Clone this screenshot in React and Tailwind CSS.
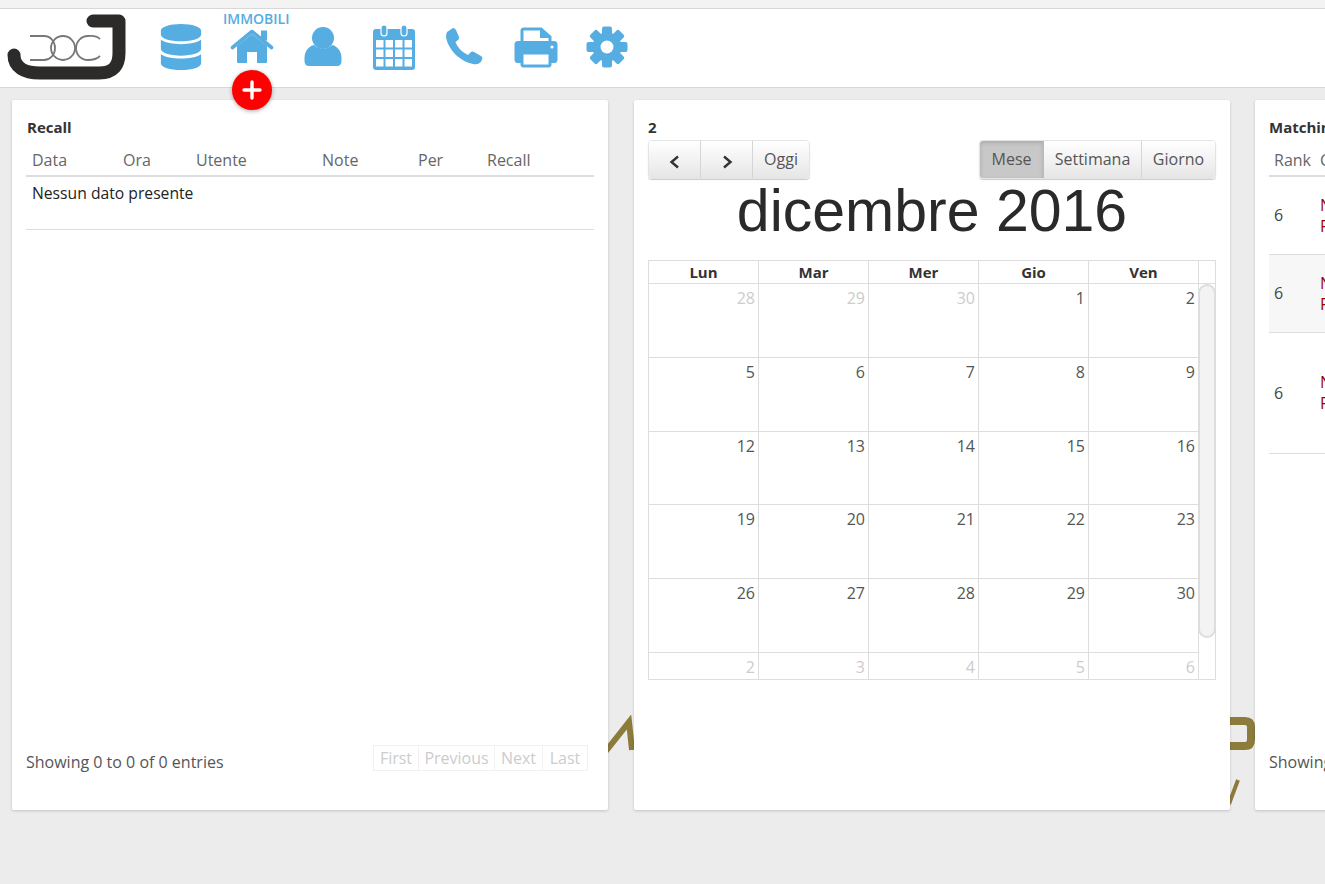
import React from 'react';
import { FaDatabase } from 'react-icons/fa';

const weeks = [
  [28, 29, 30, 1, 2],
  [5, 6, 7, 8, 9],
  [12, 13, 14, 15, 16],
  [19, 20, 21, 22, 23],
  [26, 27, 28, 29, 30],
  [2, 3, 4, 5, 6],
];
const rowHeights = ['h-[74px]', 'h-[74px]', 'h-[73px]', 'h-[74px]', 'h-[74px]', 'h-[26px]'];
const days = ['Lun', 'Mar', 'Mer', 'Gio', 'Ven'];
const blue = '#55ade2';

const Logo = () => (
  <svg width="126" height="72" viewBox="0 4 126 72" fill="none" className="block">
    <path d="M7 47 C7 59 17 65 33 65 L92 65 C107 65 112 57 112 45 L112 13 L86 13" stroke="#2c2b2a" strokeWidth="13" strokeLinecap="round" strokeLinejoin="round" />
    <path d="M23 28 L37 28 C44 28 48 34 48 40 C48 47 43 52 37 52 L23 52" stroke="#777" strokeWidth="1.8" />
    <circle cx="56" cy="40" r="12" stroke="#777" strokeWidth="1.8" />
    <path d="M93 31 C89 27 85 28 81 28 C74 28 69 34 69 40 C69 47 74 52 81 52 C85 52 89 52 93 48" stroke="#777" strokeWidth="1.8" />
  </svg>
);

const HomeIcon = () => (
  <svg width="44" height="36" viewBox="0 0 44 36" className="block">
    <path d="M7 17 L22 5 L37 17 V33 Q37 34 36 34 H27 V23 H17 V34 H8 Q7 34 7 33 Z" fill={blue} />
    <path d="M2.5 18.5 L22 2.5 L41.5 18.5" fill="none" stroke={blue} strokeWidth="3.6" strokeLinecap="round" strokeLinejoin="round" />
    <rect x="31" y="1.5" width="6" height="10" fill={blue} />
  </svg>
);

const UserIcon = () => (
  <svg width="38" height="40" viewBox="0 0 38 40" className="block">
    <circle cx="19" cy="11" r="11" fill={blue} />
    <path d="M0.5 31 C0.5 24 5 19 10 18 C15 23 23 23 28 18 C33 19 37.5 24 37.5 31 V34 Q37.5 39 33 39 H5 Q0.5 39 0.5 34 Z" fill={blue} />
  </svg>
);

const CalendarIcon = () => (
  <svg width="44" height="46" viewBox="0 0 44 46" className="block">
    <rect x="1" y="5" width="42" height="41" rx="3" fill={blue} />
    <rect x="9" y="1" width="6" height="11" rx="3" fill={blue} stroke="#fff" strokeWidth="1.2" />
    <rect x="29" y="1" width="6" height="11" rx="3" fill={blue} stroke="#fff" strokeWidth="1.2" />
    {[16, 25.5, 35].map((y) =>
      [4, 13.5, 23, 32.5].map((x) => <rect key={`${x}-${y}`} x={x} y={y} width="7.5" height="7.5" fill="#fff" />)
    )}
  </svg>
);

const PhoneIcon = () => (
  <svg width="40" height="40" viewBox="0 0 40 40" className="block">
    <path d="M2 5 L8 1 Q10 1 11 3 L14 10 Q14.5 12 13 13 L10.5 15 C13 21 17 25 23 28 L25.5 25.5 Q27 24 29 25 L36 29 Q38 30 37 33 C35 37 32 38 28 37 C14 34 3 22 1 10 Q1 7 2 5 Z" fill={blue} />
  </svg>
);

const PrintIcon = () => (
  <svg width="44" height="41" viewBox="0 0 44 41" className="block">
    <path d="M8 15 V3.5 Q8 2 10 2 H27 L36 10 V15" fill="#fff" stroke={blue} strokeWidth="3" />
    <path d="M26 1 V11 H37 Z" fill={blue} />
    <rect x="0.5" y="14" width="43" height="22" rx="3.5" fill={blue} />
    <rect x="8" y="26" width="28" height="13" rx="1.5" fill="#fff" stroke={blue} strokeWidth="3" />
    <circle cx="38" cy="20" r="1.6" fill="#fff" />
  </svg>
);

const CogIcon = () => (
  <svg width="42" height="42" viewBox="0 0 42 42" className="block">
    {[0, 45, 90, 135, 180, 225, 270, 315].map((a) => (
      <rect key={a} x="16" y="0.5" width="10" height="10" rx="2" fill={blue} transform={`rotate(${a} 21 21)`} />
    ))}
    <circle cx="21" cy="21" r="14.5" fill={blue} />
    <circle cx="21" cy="21" r="6.5" fill="#fff" />
  </svg>
);

const navBtn = 'h-full flex items-center justify-center border-r border-[#d5d5d5] last:border-r-0 bg-gradient-to-b from-white to-[#e6e6e6] text-[#555]';

const Panel = ({ className, children }) => (
  <section className={`relative h-[710px] shrink-0 bg-white rounded-[2px] shadow-[0_1px_3px_rgba(0,0,0,0.18)] flex flex-col ${className}`}>
    {children}
  </section>
);

const RecallPanel = () => (
  <Panel className="w-[596px] px-[14px]">
    <h3 className="mt-[18px] ml-[1px] text-[15px] leading-[18px] font-bold text-[#333]">Recall</h3>
    <div className="mt-[14px] h-[27px] flex border-b-2 border-[#ddd] text-[16px] leading-[20px] text-[#666]">
      <span className="w-[97px] pl-[6px] box-border">Data</span>
      <span className="w-[73px]">Ora</span>
      <span className="w-[126px]">Utente</span>
      <span className="w-[96px]">Note</span>
      <span className="w-[69px]">Per</span>
      <span>Recall</span>
    </div>
    <div className="h-[53px] border-b border-[#ddd] pl-[6px] pt-[6px] text-[15.7px] leading-[20px] text-[#222]">Nessun dato presente</div>
    <div className="mt-auto mb-[38px] flex items-center justify-between">
      <span className="text-[16px] leading-[20px] text-[#555] mt-[8px]">Showing 0 to 0 of 0 entries</span>
      <div className="mr-[6px] flex h-[26px] border border-[#f1f1f1] text-[16px] leading-[24px] text-[#ccc]">
        <span className="w-[45px] text-center border-r border-[#f1f1f1]">First</span>
        <span className="w-[76px] text-center border-r border-[#f1f1f1]">Previous</span>
        <span className="w-[48px] text-center border-r border-[#f1f1f1]">Next</span>
        <span className="w-[44px] text-center">Last</span>
      </div>
    </div>
  </Panel>
);

const CalendarPanel = () => (
  <Panel className="w-[596px] px-[14px]">
    <h3 className="mt-[18px] text-[15px] leading-[18px] font-bold text-[#333]">2</h3>
    <div className="mt-[4px] flex justify-between h-[39px] text-[16px]">
      <div className="flex h-full rounded-[4px] overflow-hidden border border-[#e4e4e4] shadow-[0_1px_1px_rgba(0,0,0,0.2)]">
        <span className={`${navBtn} w-[52px] pt-[5px]`}>
          <svg width="14" height="14" viewBox="0 0 14 14" fill="none"><path d="M10 1.5 L3.5 7 L10 12.5" stroke="#333" strokeWidth="2.4" /></svg>
        </span>
        <span className={`${navBtn} w-[52px] pt-[5px]`}>
          <svg width="14" height="14" viewBox="0 0 14 14" fill="none"><path d="M4 1.5 L10.5 7 L4 12.5" stroke="#333" strokeWidth="2.4" /></svg>
        </span>
        <span className={`${navBtn} w-[56px] pb-[2px]`}>Oggi</span>
      </div>
      <div className="flex h-full rounded-[4px] overflow-hidden border border-[#e4e4e4] shadow-[0_1px_1px_rgba(0,0,0,0.2)]">
        <span className="h-full w-[64px] pb-[2px] flex items-center justify-center border-r border-[#bbb] bg-[#c8c8c8] shadow-[inset_0_2px_4px_rgba(0,0,0,0.15)] text-[#555]">Mese</span>
        <span className={`${navBtn} w-[98px] pb-[2px]`}>Settimana</span>
        <span className={`${navBtn} w-[73px] pb-[2px]`}>Giorno</span>
      </div>
    </div>
    <h2 className="h-[81px] text-center text-[59px] leading-[64px] text-[#2a2a2a] font-['Liberation_Sans',sans-serif]">dicembre 2016</h2>
    <div className="w-[568px] border border-[#ddd]">
      <div className="flex h-[23px] border-b border-[#ddd] text-[15px] leading-[23px] font-bold text-[#333]">
        {days.map((d) => (
          <div key={d} className="w-[110px] shrink-0 text-center border-r border-[#ddd]">{d}</div>
        ))}
      </div>
      <div className="relative">
        {weeks.map((week, i) => (
          <div key={i} className={`flex w-[550px] ${rowHeights[i]} ${i < 5 ? 'border-b border-[#ddd]' : ''}`}>
            {week.map((n, j) => (
              <div
                key={j}
                className={`w-[110px] shrink-0 border-r border-[#ddd] text-right pr-[3px] pt-[4px] text-[16px] leading-[21px] ${(i === 0 && j < 3) || i === 5 ? 'text-[#ccc]' : 'text-[#555]'}`}
              >
                {n}
              </div>
            ))}
          </div>
        ))}
        {/* scrollbar */}
        <div className="absolute left-[549px] top-0 w-[18px] h-[354px] rounded-[9px] bg-[#f3f3f3] border-2 border-[#ddd]" />
      </div>
    </div>
  </Panel>
);

const MatchingPanel = () => (
  <Panel className="w-[596px] -ml-[1px] px-[14px]">
    <h3 className="mt-[18px] text-[15px] leading-[18px] font-bold text-[#333]">Matching</h3>
    <div className="mt-[14px] h-[27px] flex border-b-2 border-[#ddd] text-[16px] leading-[20px] text-[#666]">
      <span className="w-[51px] pl-[5px] box-border">Rank</span>
      <span>Cliente</span>
    </div>
    {[['h-[78px]', ''], ['h-[78px]', 'bg-[#f7f7f7]'], ['h-[121px]', '']].map(([h, bg], i) => (
      <div key={i} className={`${h} ${bg} flex items-center border-b border-[#ddd] text-[16px] leading-[21px]`}>
        <span className="w-[51px] pl-[5px] box-border text-[#444]">6</span>
        <span className="text-[#900] whitespace-pre-line">{'Nome\nProprietà'}</span>
      </div>
    ))}
    <div className="mt-auto mb-[38px] text-[16px] leading-[20px] text-[#555]">Showing 0 to 0 of 0 entries</div>
  </Panel>
);

export default function App() {
  return (
    <div className="relative h-[884px] w-[1325px] overflow-hidden bg-[#ececec] font-['Open_Sans',sans-serif]">
      {/* watermark logo behind the panels */}
      <svg className="absolute left-[600px] top-[715px]" width="660" height="100" viewBox="0 0 660 100" fill="none">
        <path d="M6 36 L29 7 L32 35" stroke="#8d7b3c" strokeWidth="6" />
        <path d="M620 6 H645 Q651 6 651 12 V25 Q651 31 645 31 H620" stroke="#8d7b3c" strokeWidth="8" />
        <path d="M638 65 L629 89" stroke="#8d7b3c" strokeWidth="4" />
      </svg>

      <div className="relative h-[9px] bg-[#f3f3f3] border-b border-[#d8d8d8]" />
      <header className="relative z-10 h-[79px] bg-white border-b border-[#d8d8d8] flex items-center pl-[7px] text-[#55ade2]">
        <div className="w-[138px] shrink-0"><Logo /></div>
        <nav className="flex items-center -mt-[2px]">
          <div className="w-[71px] flex justify-center"><FaDatabase size={46} /></div>
          <div className="relative w-[71px] flex justify-center">
            <HomeIcon />
            <span className="absolute left-[7px] -top-[17px] text-[14px] leading-[14px] font-semibold whitespace-nowrap">IMMOBILI</span>
            <span className="absolute left-[16px] top-[41px] w-[40px] h-[40px] rounded-full bg-[#f00] shadow-[0_1px_4px_rgba(0,0,0,0.35)] flex items-center justify-center">
              <svg width="20" height="20" viewBox="0 0 20 20"><path d="M10 2 V18 M2 10 H18" stroke="#fff" strokeWidth="3.4" strokeLinecap="round" /></svg>
            </span>
          </div>
          <div className="w-[71px] flex justify-center"><UserIcon /></div>
          <div className="w-[71px] flex justify-center"><CalendarIcon /></div>
          <div className="w-[71px] flex justify-center"><PhoneIcon /></div>
          <div className="w-[71px] flex justify-center"><PrintIcon /></div>
          <div className="w-[71px] flex justify-center"><CogIcon /></div>
        </nav>
      </header>
      <main className="relative mt-[12px] flex gap-[26px] pl-[12px]">
        <RecallPanel />
        <CalendarPanel />
        <MatchingPanel />
      </main>
    </div>
  );
}
